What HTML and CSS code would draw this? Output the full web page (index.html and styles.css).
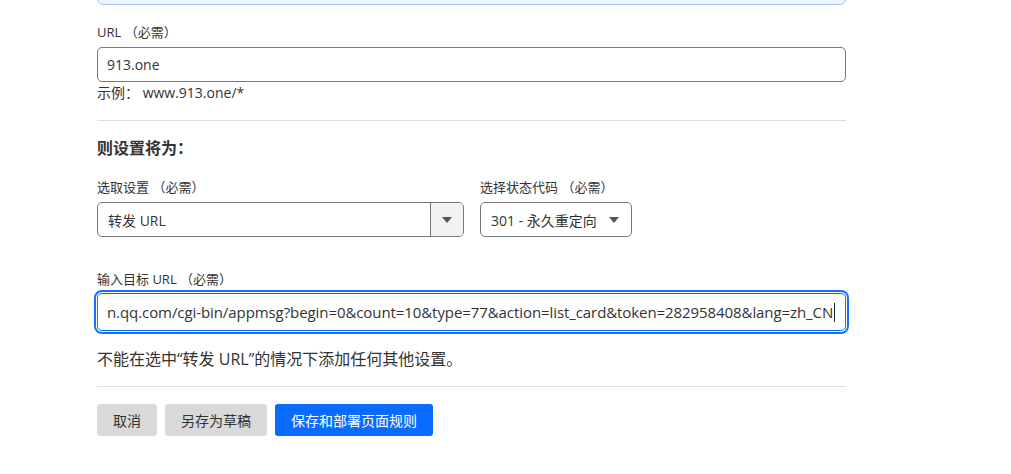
FILE: index.html
```html
<!DOCTYPE html>
<html lang="zh-CN">
<head>
    <meta charset="UTF-8">
    <meta name="viewport" content="width=device-width, initial-scale=1.0">
    <title>页面规则</title>
    <link rel="stylesheet" href="styles.css">
</head>
<body>
    <div class="form">
        <div class="notice"></div>

        <label class="field-label">URL （必需）</label>
        <input class="text-input" type="text" value="913.one">
        <p class="hint">示例： www.913.one/*</p>

        <hr class="divider">

        <h3 class="section-title">则设置将为：</h3>

        <div class="row">
            <div class="col col-setting">
                <label class="field-label">选取设置 （必需）</label>
                <div class="combo">
                    <span class="combo-value">转发 URL</span>
                    <span class="combo-arrow"><span class="caret"></span></span>
                </div>
            </div>
            <div class="col">
                <label class="field-label">选择状态代码 （必需）</label>
                <div class="select">
                    <span>301 - 永久重定向</span>
                    <span class="caret"></span>
                </div>
            </div>
        </div>

        <label class="field-label target-label">输入目标 URL （必需）</label>
        <div class="text-input focused">
            <span class="scroll-text">n.qq.com/cgi-bin/appmsg?begin=0&amp;count=10&amp;type=77&amp;action=list_card&amp;token=282958408&amp;lang=zh_CN</span><span class="cursor"></span>
        </div>

        <p class="warning">不能在选中“转发 URL”的情况下添加任何其他设置。</p>

        <hr class="divider bottom">

        <div class="actions">
            <button class="btn btn-gray">取消</button>
            <button class="btn btn-gray">另存为草稿</button>
            <button class="btn btn-blue">保存和部署页面规则</button>
        </div>
    </div>
</body>
</html>
```

FILE: styles.css
```css
body {
    margin: 0;
    background: #fff;
    color: #333;
    font-family: 'Open Sans', 'Noto Sans CJK SC', sans-serif;
}
.form {
    width: 749px;
    margin-left: 97px;
}
.notice {
    height: 40px;
    margin-top: -37px;
    background: #eef4ff;
    border: 1px solid #9ec2f7;
    border-radius: 6px;
}
.field-label {
    display: block;
    font-size: 13px;
    line-height: 18px;
    margin: 18px 0 6px;
    color: #333;
}
.text-input {
    display: block;
    box-sizing: border-box;
    width: 100%;
    height: 35px;
    padding: 0 9px;
    border: 1px solid #777;
    border-radius: 5px;
    font-family: inherit;
    font-size: 14px;
    color: #333;
    background: #fff;
}
.hint {
    margin: 2px 0 0;
    font-size: 14px;
    line-height: 18px;
}
.divider {
    border: 0;
    border-top: 1px solid #ddd;
    margin: 18px 0 0;
}
.section-title {
    margin: 16px 0 0;
    font-size: 16px;
    line-height: 22px;
    font-weight: bold;
}
.row {
    display: flex;
    gap: 16px;
}
.row .field-label {
    margin-top: 19px;
}
.col-setting {
    width: 367px;
}
.combo {
    box-sizing: border-box;
    height: 35px;
    display: flex;
    border: 1px solid #777;
    border-radius: 5px;
    font-size: 14px;
    overflow: hidden;
}
.combo-value {
    flex: 1;
    display: flex;
    align-items: center;
    padding-left: 10px;
}
.combo-arrow {
    width: 32px;
    border-left: 1px solid #777;
    background: #f2f2f2;
    display: flex;
    align-items: center;
    justify-content: center;
}
.caret {
    width: 0;
    height: 0;
    border-left: 5px solid transparent;
    border-right: 5px solid transparent;
    border-top: 6px solid #555;
}
.select {
    box-sizing: border-box;
    width: 152px;
    height: 35px;
    display: flex;
    align-items: center;
    gap: 12px;
    padding-left: 10px;
    border: 1px solid #777;
    border-radius: 5px;
    font-size: 14px;
}
.target-label {
    margin-top: 33px;
    margin-bottom: 5px;
}
.focused {
    display: flex;
    align-items: center;
    height: 38px;
    border-color: #1570ff;
    box-shadow: 0 0 0 1px #fff, 0 0 0 3px #1570ff;
    white-space: nowrap;
    overflow: hidden;
    font-size: 15px;
    letter-spacing: -0.08px;
}
.cursor {
    display: inline-block;
    flex: none;
    width: 1px;
    height: 19px;
    margin-left: 1px;
    background: #222;
}
.warning {
    margin: 17px 0 0;
    font-size: 16px;
    line-height: 22px;
}
.divider.bottom {
    margin-top: 16px;
}
.actions {
    display: flex;
    gap: 8px;
    margin-top: 17px;
}
.btn {
    height: 32px;
    padding: 0 16px;
    border: 0;
    border-radius: 3px;
    font-family: inherit;
    font-size: 14px;
    cursor: pointer;
}
.btn-gray {
    background: #d9d9d9;
    color: #333;
}
.btn-blue {
    background: #0a6cff;
    color: #fff;
}
```
